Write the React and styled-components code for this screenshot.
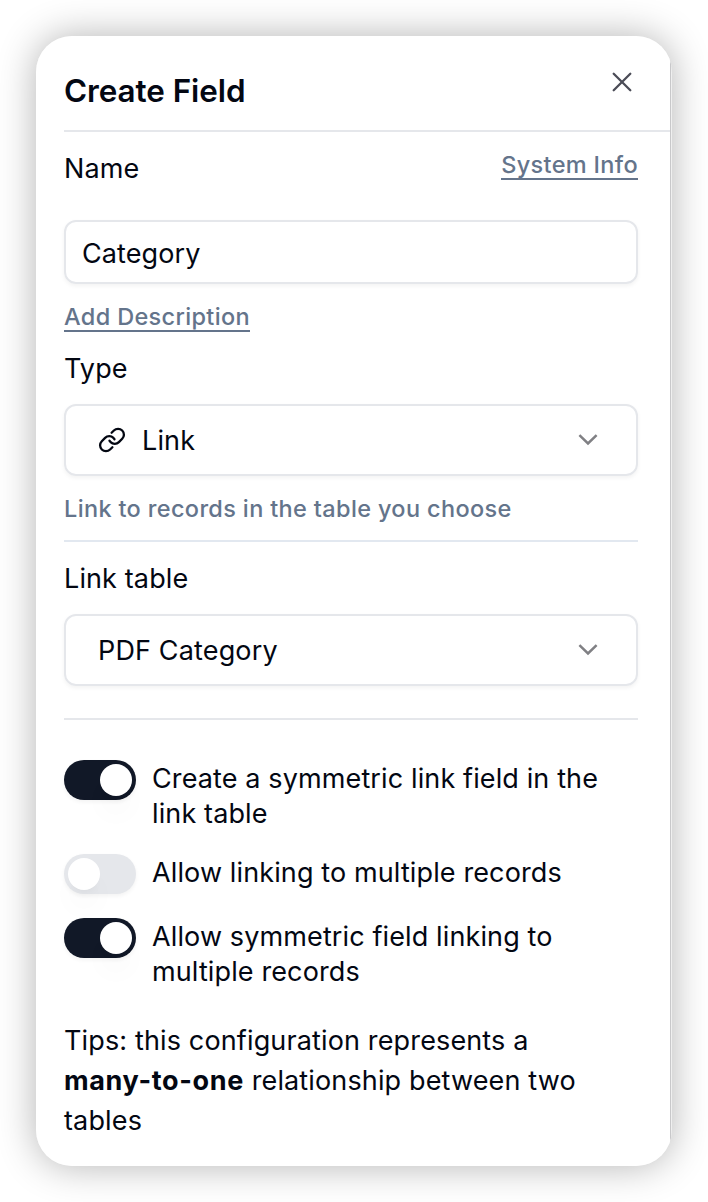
import React from "react";
import styled, { createGlobalStyle } from "styled-components";

const Global = createGlobalStyle`
  *, *::before, *::after { box-sizing: border-box; }
  body {
    margin: 0;
    background: #fff;
    color: #030712;
    font-family: Inter, "Liberation Sans", sans-serif;
    font-size: 27px;
    line-height: 40px;
  }
  p, h1 { margin: 0; }
`;

const Stage = styled.main`
  width: 708px;
  height: 1202px;
  padding: 36px;
  overflow: hidden;
`;

const Panel = styled.section`
  width: 636px;
  height: 1130px;
  border-radius: 36px;
  box-shadow: 0 0 38px rgba(0, 0, 0, 0.3);
  overflow: hidden;
  display: flex;
  background: #efefef;
`;

const Content = styled.div`
  width: 635px;
  background: #fff;
  border-right: 1px solid #c8c8ca;
  padding-left: 28px;
`;

const Header = styled.header`
  height: 96px;
  display: flex;
  justify-content: space-between;
  padding: 30px 32px 0 0;
  border-bottom: 2px solid #e5e7eb;
`;

const Title = styled.h1`
  padding-top: 1px;
  font-size: 31.4px;
  line-height: 48px;
  font-weight: 600;
  letter-spacing: -0.05px;
`;

const IconButton = styled.button`
  width: 32px;
  height: 32px;
  padding: 0;
  border: 0;
  background: none;
  color: #4b4c57;
`;

const Form = styled.div`
  width: 574px;
  display: flex;
  flex-direction: column;
`;

const LabelRow = styled.div`
  height: 88px;
  display: flex;
  justify-content: space-between;
  padding-top: 16px;
`;

const Label = styled.label`
  display: block;
  padding-top: 1px;
  letter-spacing: 0.12px;
`;

const FieldLabel = styled(Label)`
  height: 72px;
  padding-top: 17px;
`;

const TextLink = styled.a`
  align-self: flex-start;
  height: 32px;
  font-size: 23.5px;
  line-height: 34px;
  font-weight: 500;
  color: #64748b;
  border-bottom: 2px solid #64748b;
  letter-spacing: 0.34px;
`;

const Input = styled.input`
  height: 64px;
  width: 100%;
  margin-bottom: 16px;
  padding: 2px 16px 0;
  border: 2px solid #e5e7eb;
  border-radius: 12px;
  background: transparent;
  color: inherit;
  font: inherit;
  letter-spacing: 0.1px;
  box-shadow: 0 2px 4px rgba(0, 0, 0, 0.05);
`;

const Select = styled.button`
  height: 72px;
  width: 100%;
  display: flex;
  align-items: center;
  gap: 16px;
  padding: 0 32px;
  border: 2px solid #e5e7eb;
  border-radius: 12px;
  background: transparent;
  color: inherit;
  font: inherit;
  letter-spacing: 0.15px;
  text-align: left;
  box-shadow: 0 2px 4px rgba(0, 0, 0, 0.05);
`;

const SelectValue = styled.span`
  flex: 1;
  padding-top: 2px;
`;

const Icon = styled.svg`
  display: block;
  flex: none;
  fill: none;
  stroke: currentColor;
  stroke-linecap: round;
  stroke-linejoin: round;
`;

const ChevronIcon = styled(Icon)`
  color: #808084;
  stroke-linecap: butt;
  stroke-linejoin: miter;
`;

const Helper = styled.p`
  height: 64px;
  padding-top: 16px;
  font-size: 23.5px;
  line-height: 34px;
  font-weight: 500;
  color: #64748b;
  letter-spacing: 0.35px;
`;

const Divider = styled.hr`
  width: 100%;
  height: 2px;
  margin: ${(p) => p.$top ?? 0}px 0 0;
  border: 0;
  background: ${(p) => p.$color ?? "#e5e7eb"};
`;

const SwitchList = styled.div`
  display: flex;
  flex-direction: column;
  gap: 23px;
  padding-top: 40px;
`;

const SwitchRow = styled.div`
  display: flex;
  align-items: flex-start;
  gap: 16px;
  min-height: 41px;
`;

const Track = styled.button`
  width: 72px;
  height: 40px;
  flex: none;
  display: flex;
  justify-content: ${(p) => (p.$on ? "flex-end" : "flex-start")};
  padding: 4px;
  border: 0;
  border-radius: 20px;
  background: ${(p) => (p.$on ? "#111827" : "#e5e7eb")};
  box-shadow: 0 2px 4px rgba(0, 0, 0, 0.05);
`;

const Thumb = styled.span`
  width: 32px;
  height: 32px;
  border-radius: 50%;
  background: #fff;
  box-shadow: 0 20px 30px -6px rgba(0, 0, 0, 0.06), 0 8px 12px -8px rgba(0, 0, 0, 0.08);
`;

const SwitchLabel = styled.span`
  line-height: 35px;
  padding-top: 1px;
  white-space: nowrap;
  letter-spacing: 0.12px;
`;

const Tips = styled.p`
  padding-top: 32px;
  line-height: 40px;
  white-space: nowrap;
  letter-spacing: 0.14px;
`;

const Strong = styled.strong`
  font-weight: 700;
  letter-spacing: 0.65px;
`;

function Chevron() {
  return (
    <ChevronIcon width="32" height="32" viewBox="0 0 32 32" strokeWidth="2.5">
      <path d="M7.4 11.2 16 19.5l8.6-8.3" />
    </ChevronIcon>
  );
}

function LinkIcon() {
  return (
    <Icon width="28" height="28" viewBox="0 0 28 28" strokeWidth="2.3">
      <path d="M13.6 6.8l2.3-2.3a5.9 5.9 0 0 1 8.3 0 5.9 5.9 0 0 1 0 8.3l-3.3 3.3a5.9 5.9 0 0 1-8.3 0l-1.1-1.4" />
      <path d="M14.4 21.2l-2.3 2.3a5.9 5.9 0 0 1-8.3 0 5.9 5.9 0 0 1 0-8.3l3.3-3.3a5.9 5.9 0 0 1 8.3 0l1.1 1.4" />
    </Icon>
  );
}

function CloseIcon() {
  return (
    <Icon width="32" height="32" viewBox="0 0 32 32" strokeWidth="2.3">
      <path d="M7.7 7.7l16.6 16.6M24.3 7.7l-16.6 16.6" />
    </Icon>
  );
}

function SwitchField({ on, children }) {
  return (
    <SwitchRow>
      <Track type="button" role="switch" aria-checked={on} $on={on}>
        <Thumb />
      </Track>
      <SwitchLabel>{children}</SwitchLabel>
    </SwitchRow>
  );
}

export default function App() {
  return (
    <>
      <Global />
      <Stage>
        <Panel>
          <Content>
            <Header>
              <Title>Create Field</Title>
              <IconButton type="button" aria-label="Close">
                <CloseIcon />
              </IconButton>
            </Header>
            <Form>
              <LabelRow>
                <Label htmlFor="name">Name</Label>
                <TextLink>System Info</TextLink>
              </LabelRow>
              <Input id="name" defaultValue="Category" />
              <TextLink>Add Description</TextLink>
              <FieldLabel>Type</FieldLabel>
              <Select type="button">
                <LinkIcon />
                <SelectValue>Link</SelectValue>
                <Chevron />
              </Select>
              <Helper>Link to records in the table you choose</Helper>
              <Divider $color="#e2e8f0" />
              <FieldLabel>Link table</FieldLabel>
              <Select type="button">
                <SelectValue>PDF Category</SelectValue>
                <Chevron />
              </Select>
              <Divider $top={32} />
              <SwitchList>
                <SwitchField on>
                  Create a symmetric link field in the
                  <br />
                  link table
                </SwitchField>
                <SwitchField on={false}>Allow linking to multiple records</SwitchField>
                <SwitchField on>
                  Allow symmetric field linking to
                  <br />
                  multiple records
                </SwitchField>
              </SwitchList>
              <Tips>
                Tips: this configuration represents a
                <br />
                <Strong>many-to-one</Strong> relationship between two
                <br />
                tables
              </Tips>
            </Form>
          </Content>
        </Panel>
      </Stage>
    </>
  );
}
